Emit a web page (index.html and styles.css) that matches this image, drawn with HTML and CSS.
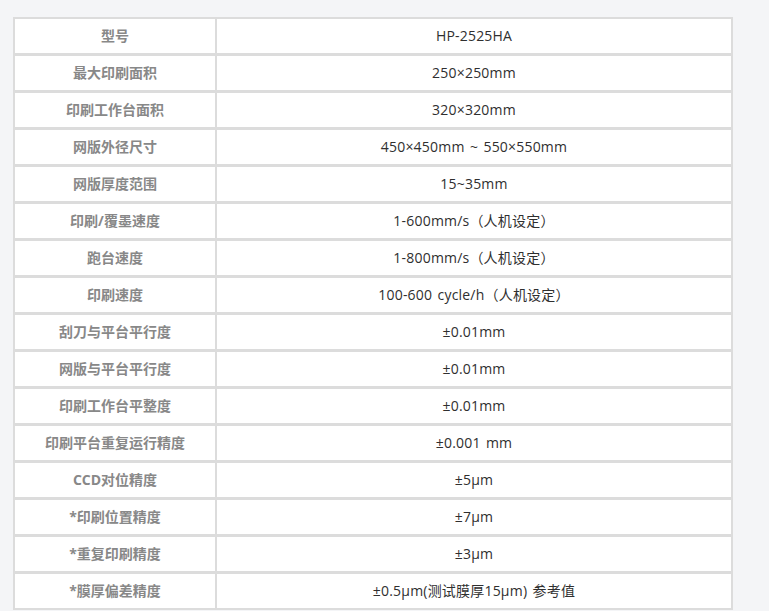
FILE: index.html
```html
<!DOCTYPE html>
<html lang="zh">
<head>
<meta charset="utf-8">
<link rel="stylesheet" href="styles.css">
</head>
<body>
<table class="spec">
<tbody>
<tr><th>型号</th><td>HP-2525HA</td></tr>
<tr><th>最大印刷面积</th><td>250×250mm</td></tr>
<tr><th>印刷工作台面积</th><td>320×320mm</td></tr>
<tr><th>网版外径尺寸</th><td>450×450mm ~ 550×550mm</td></tr>
<tr><th>网版厚度范围</th><td>15~35mm</td></tr>
<tr><th>印刷/覆墨速度</th><td>1-600mm/s（人机设定）</td></tr>
<tr><th>跑台速度</th><td>1-800mm/s（人机设定）</td></tr>
<tr><th>印刷速度</th><td>100-600 cycle/h（人机设定）</td></tr>
<tr><th>刮刀与平台平行度</th><td>±0.01mm</td></tr>
<tr><th>网版与平台平行度</th><td>±0.01mm</td></tr>
<tr><th>印刷工作台平整度</th><td>±0.01mm</td></tr>
<tr><th>印刷平台重复运行精度</th><td>±0.001 mm</td></tr>
<tr><th>CCD对位精度</th><td>±5μm</td></tr>
<tr><th>*印刷位置精度</th><td>±7μm</td></tr>
<tr><th>*重复印刷精度</th><td>±3μm</td></tr>
<tr><th>*膜厚偏差精度</th><td>±0.5μm(测试膜厚15μm) 参考值</td></tr>
</tbody>
</table>
</body>
</html>
```
FILE: styles.css
```css
html, body {
  margin: 0;
  padding: 0;
  background: #f4f5f7;
}
body {
  padding: 17px 0 0 13px;
  font-family: "Open Sans", "Noto Sans CJK SC", sans-serif;
  font-size: 14px;
}
.spec {
  border-collapse: separate;
  border-spacing: 0;
  width: 720px;
  border: 2px solid #dcdcdc;
  background: #fff;
}
.spec th,
.spec td {
  height: 34px;
  padding: 0;
  text-align: center;
  vertical-align: middle;
  border-bottom: 3px solid #dcdcdc;
  line-height: 20px;
}
.spec tr:last-child th,
.spec tr:last-child td {
  border-bottom: none;
}
.spec th {
  width: 200px;
  border-right: 2px solid #dcdcdc;
  color: #888;
  font-weight: bold;
}
.spec td {
  color: #2f2f2f;
  font-weight: normal;
  letter-spacing: 0.2px;
  word-spacing: 1.5px;
}
```
